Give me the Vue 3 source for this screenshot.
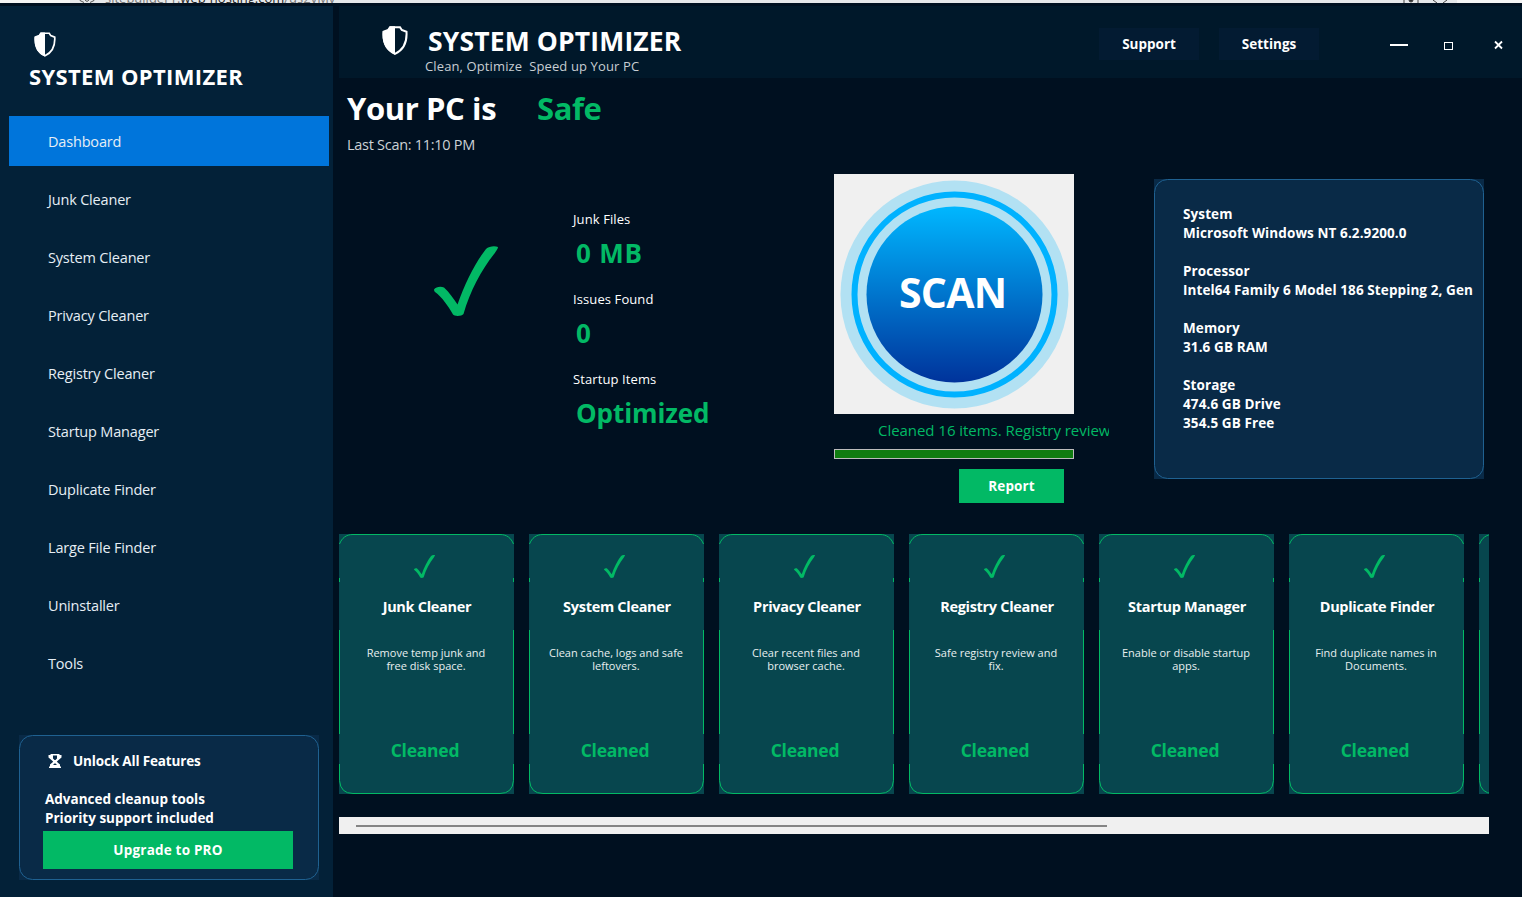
<template>
    <div class="window">
        <div class="browser-strip">
            <svg class="strip-lock" width="20" height="3" viewBox="0 0 20 3">
                <path d="M3 0v.5l4 2M17 0v.5l-4 2M8 0l2 1.5L12 0" />
            </svg>
            <span class="strip-url">sitebuilder1.<b>web-hosting.com</b>/us2vMv</span>
            <svg class="strip-icons" width="60" height="3" viewBox="0 0 60 3">
                <path d="M2 0v3M16 0v3M31 0l4 3M45 0l-4 3" />
                <circle cx="9" cy="0" r="2" />
            </svg>
        </div>

        <div class="body">
            <aside class="sidebar">
                <div class="brand">
                    <svg class="brand-icon" viewBox="0 0 26 29">
                        <path class="shield-line" d="M13 1.2H18L19.8 4L24.5 5.8C25 14 23.5 23 13 27.8C2.5 23 1 14 1.5 5.8L6.2 4L8 1.2Z" />
                        <path class="shield-fill" d="M13 .2H8L6 3.500L.8 5.500C0 14 1.500 23.500 13 28.800Z" />
                    </svg>
                    <span class="brand-name">SYSTEM OPTIMIZER</span>
                </div>

                <nav class="menu">
                    <button
                        v-for="item in menuItems"
                        :key="item"
                        :class="['menu-item', { active: item === activeItem }]"
                        @click="activeItem = item"
                    >{{ item }}</button>
                </nav>

                <div class="promo">
                    <svg class="panel-outline" width="300" height="145">
                        <rect x=".5" y=".5" width="299" height="144" rx="13" />
                    </svg>
                    <div class="promo-title">
                        <svg width="14" height="16" viewBox="0 0 14 16">
                            <path d="M2.500 1h9v1h2v2.500L10 7.500L8.800 8.800L12 11.500v2h1V15H1v-1.500h1v-2l3.200-2.700L4 7.500L.5 4.500V2h2z" />
                            <path class="trophy-hole" d="M5 2.500h4v3L7.500 7h-1L5 5.500zM5 12l1.500-1.500h1L9 12z" />
                        </svg>
                        <span>Unlock All Features</span>
                    </div>
                    <p class="promo-text">Advanced cleanup tools<br>Priority support included</p>
                    <button class="upgrade-btn">Upgrade to PRO</button>
                </div>
            </aside>

            <main class="main">
                <header class="header">
                    <svg class="header-icon" viewBox="0 0 26 29">
                        <path class="shield-line" d="M13 1.2H18L19.8 4L24.5 5.8C25 14 23.5 23 13 27.8C2.5 23 1 14 1.5 5.8L6.2 4L8 1.2Z" />
                        <path class="shield-fill" d="M13 .2H8L6 3.500L.8 5.500C0 14 1.500 23.500 13 28.800Z" />
                    </svg>
                    <div class="header-text">
                        <span class="header-title">SYSTEM OPTIMIZER</span>
                        <span class="header-sub">Clean, Optimize&nbsp; Speed up Your PC</span>
                    </div>
                    <button class="header-btn">Support</button>
                    <button class="header-btn">Settings</button>
                    <div class="window-controls">
                        <svg width="130" height="20" viewBox="0 0 130 20">
                            <path class="ctl-min" d="M10 11H28" />
                            <rect class="ctl-max" x="64.500" y="8.500" width="8" height="7" />
                            <path class="ctl-close" d="M115 7.500l7 7M122 7.500l-7 7" />
                        </svg>
                    </div>
                </header>

                <section class="status">
                    <h1>
                        <span class="status-label">Your PC is</span>
                        <span class="status-value">Safe</span>
                    </h1>
                    <p class="last-scan">Last Scan: 11:10 PM</p>
                </section>

                <section class="overview">
                    <svg class="big-check" width="64" height="70" viewBox="0 0 64 70">
                        <path :d="checkPath" />
                    </svg>

                    <div class="stats">
                        <div v-for="stat in stats" :key="stat.label" class="stat">
                            <span class="stat-label">{{ stat.label }}</span>
                            <span :class="['stat-value', stat.key]">{{ stat.value }}</span>
                        </div>
                    </div>

                    <div class="scan">
                        <button class="scan-btn">
                            <svg width="240" height="240" viewBox="0 0 240 240">
                                <defs>
                                    <linearGradient id="scanFill" x1="0" y1="0" x2="0" y2="1">
                                        <stop offset="0" stop-color="#00b7ff" />
                                        <stop offset="1" stop-color="#00339b" />
                                    </linearGradient>
                                </defs>
                                <circle cx="120.500" cy="120.500" r="114" fill="#b2e1f3" />
                                <circle cx="120.500" cy="120.500" r="100" fill="none" stroke="#00b2ff" stroke-width="6" />
                                <circle cx="120.500" cy="120.500" r="88" fill="url(#scanFill)" />
                                <text x="119" y="134" text-anchor="middle" textLength="108">SCAN</text>
                            </svg>
                        </button>
                        <div class="scan-message"><span>Cleaned 16 items. Registry reviewed.</span></div>
                        <div class="progress"></div>
                        <button class="report-btn">Report</button>
                    </div>

                    <div class="system-info">
                        <svg class="panel-outline" width="330" height="300">
                            <rect x=".5" y=".5" width="329" height="299" rx="13" />
                        </svg>
                        <dl v-for="info in systemInfo" :key="info.title">
                            <dt>{{ info.title }}</dt>
                            <dd v-for="line in info.lines" :key="line">{{ line }}</dd>
                        </dl>
                    </div>
                </section>

                <section class="cards">
                    <article v-for="card in cards" :key="card.title" class="card">
                        <svg class="card-outline" width="175" height="260">
                            <path d="M.5 10C3 4 7 .5 14 .5H161C168 .5 172 4 174.500 10M.5 44v4M174.500 44v4M.5 96V200M174.500 96V200M.5 230v16.500Q1.500 259.500 14 259.500H161Q173.500 259.500 174.500 246.500V230" />
                        </svg>
                        <svg class="card-check" width="21" height="23" viewBox="0 0 64 70">
                            <path :d="checkPath" />
                        </svg>
                        <h3>{{ card.title }}</h3>
                        <p><template v-for="line in card.text" :key="line">{{ line }}<br></template></p>
                        <strong v-if="card.title">Cleaned</strong>
                    </article>
                </section>

                <div class="scrollbar"><div class="scrollbar-thumb"></div></div>
            </main>
        </div>
    </div>
</template>

<script setup>
import { ref } from 'vue'

const menuItems = [
    'Dashboard',
    'Junk Cleaner',
    'System Cleaner',
    'Privacy Cleaner',
    'Registry Cleaner',
    'Startup Manager',
    'Duplicate Finder',
    'Large File Finder',
    'Uninstaller',
    'Tools'
]
const activeItem = ref('Dashboard')

const stats = [
    { key: 'junk', label: 'Junk Files', value: '0 MB' },
    { key: 'issues', label: 'Issues Found', value: '0' },
    { key: 'startup', label: 'Startup Items', value: 'Optimized' }
]

const systemInfo = [
    { title: 'System', lines: ['Microsoft Windows NT 6.2.9200.0'] },
    { title: 'Processor', lines: ['Intel64 Family 6 Model 186 Stepping 2, Gen'] },
    { title: 'Memory', lines: ['31.6 GB RAM'] },
    { title: 'Storage', lines: ['474.6 GB Drive', '354.5 GB Free'] }
]

const cards = [
    { title: 'Junk Cleaner', text: ['Remove temp junk and', 'free disk space.'] },
    { title: 'System Cleaner', text: ['Clean cache, logs and safe', 'leftovers.'] },
    { title: 'Privacy Cleaner', text: ['Clear recent files and', 'browser cache.'] },
    { title: 'Registry Cleaner', text: ['Safe registry review and', 'fix.'] },
    { title: 'Startup Manager', text: ['Enable or disable startup', 'apps.'] },
    { title: 'Duplicate Finder', text: ['Find duplicate names in', 'Documents.'] },
    { title: '', text: [] }
]

const checkPath = 'M0 43.500C2 40.500 7 40 10 41.500C15 46 20 53 23.500 58.500C31 37 41 17 52 3C55 0 61 -.5 64 1C64 3 62 5 60.500 7.500C48 23 36 45 29.500 68C28 70.500 20 70.500 19 68.500C14 60 8 51 1 46Q0 45 0 43.500Z'
</script>

<style>
body {
    margin: 0;
    overflow: hidden;
    background-color: #001020;
}
</style>

<style scoped>
.window {
    width: 1522px;
    height: 897px;
    overflow: hidden;
    background-color: #001020;
    color: #fff;
    font-family: "Open Sans", "Noto Sans", sans-serif;
}

button {
    border: none;
    padding: 0;
    color: inherit;
    font-family: inherit;
    cursor: pointer;
}

h1, h3, p, dl, dd {
    margin: 0;
}

svg {
    display: block;
    flex-shrink: 0;
}

.browser-strip {
    display: flex;
    height: 3px;
    overflow: hidden;
    background: linear-gradient(90deg, #f5f5f5 70px, #e6e8ea 70px, #e6e8ea 1457px, #f5f5f5 1457px);
}

.strip-lock {
    margin-left: 77px;
    fill: none;
    stroke: #555;
}

.strip-url {
    margin-left: 8px;
    margin-top: -9px;
    width: 1297px;
    height: 20px;
    line-height: 14px;
    font-size: 13px;
    color: #777;
    white-space: nowrap;
}

.strip-url b {
    color: #222;
    font-weight: 500;
}

.strip-icons {
    fill: #333;
    stroke: #444;
}

.body {
    display: flex;
    height: 891px;
    padding-top: 3px;
}

/* Sidebar */
.sidebar {
    display: flex;
    flex-direction: column;
    width: 333px;
    flex-shrink: 0;
    background-color: #032138;
}

.brand {
    height: 110px;
    display: flex;
    flex-direction: column;
}

.brand-icon {
    width: 22px;
    height: 25px;
    margin: 26px 0 0 34px;
}

.shield-line {
    fill: none;
    stroke: #fff;
    stroke-width: 2;
}

.shield-fill {
    fill: #fff;
}

.brand-name {
    margin: 5px 0 0 29px;
    line-height: 28px;
    font-size: 22px;
    font-weight: 700;
    letter-spacing: 0.35px;
    white-space: nowrap;
}

.menu {
    display: flex;
    flex-direction: column;
    gap: 8px;
    margin-left: 9px;
    width: 320px;
}

.menu-item {
    height: 50px;
    padding: 0 0 0 39px;
    background-color: transparent;
    text-align: left;
    font-size: 14.5px;
    letter-spacing: -0.18px;
    color: #e6eef5;
}

.menu-item.active {
    background-color: #0075db;
}

.promo {
    position: relative;
    box-sizing: border-box;
    width: 300px;
    height: 145px;
    margin: 47px 0 0 19px;
    padding: 17px 0 0 24px;
    background-color: #092a47;
    font-size: 13.5px;
    font-weight: 700;
}

.panel-outline {
    position: absolute;
    top: 0;
    left: 0;
    fill: none;
    stroke: #1f6191;
}

.promo-title {
    display: flex;
    align-items: center;
    gap: 11px;
    height: 18px;
    margin-left: 5px;
    letter-spacing: -0.15px;
}

.promo-title svg {
    fill: #fff;
}

.promo-title .trophy-hole {
    fill: #092a47;
}

.promo-text {
    margin: 20px 0 0 2px;
    line-height: 19px;
}

.upgrade-btn {
    display: block;
    width: 250px;
    height: 38px;
    margin-top: 3px;
    background-color: #02b965;
    font-size: 13.5px;
    font-weight: 700;
    letter-spacing: 0.2px;
}

/* Header */
.main {
    flex: 1;
    min-width: 0;
    padding-left: 6px;
}

.header {
    display: flex;
    height: 72px;
    background-color: #00182a;
}

.header-icon {
    width: 26px;
    height: 29px;
    margin: 20px 0 0 43px;
}

.header-text {
    display: flex;
    flex-direction: column;
    width: 674px;
    margin: 19px 0 0 17px;
    white-space: nowrap;
}

.header-title {
    margin-left: 3px;
    line-height: 32px;
    font-size: 26.5px;
    font-weight: 700;
    letter-spacing: 0.15px;
}

.header-sub {
    line-height: 18px;
    font-size: 13px;
    letter-spacing: 0.12px;
    color: #c8ced3;
}

.header-btn {
    width: 100px;
    height: 32px;
    margin: 22px 20px 0 0;
    background-color: #031b32;
    font-size: 13.5px;
    font-weight: 700;
}

.window-controls {
    margin: 28px 0 0 41px;
    fill: none;
    stroke: #fff;
}

.ctl-min {
    stroke-width: 2;
}

.ctl-close {
    stroke-width: 1.8;
}

/* Status line */
.status {
    height: 96px;
    padding-left: 8px;
}

.status h1 {
    display: flex;
    padding-top: 8px;
    line-height: 44px;
    font-size: 31px;
    letter-spacing: -0.4px;
}

.status-label {
    width: 190px;
}

.status-value {
    color: #02b965;
}

.last-scan {
    margin-top: 5px;
    line-height: 20px;
    font-size: 14.5px;
    letter-spacing: -0.28px;
    color: #ccd2d6;
}

/* Overview */
.overview {
    display: flex;
    align-items: flex-start;
    height: 360px;
}

.big-check {
    margin: 72px 0 0 95px;
    fill: #02b965;
}

.stats {
    width: 261px;
    margin: 35px 0 0 75px;
}

.stat {
    display: flex;
    flex-direction: column;
    height: 80px;
}

.stat-label {
    line-height: 20px;
    font-size: 13px;
    letter-spacing: 0.1px;
}

.stat-value {
    margin: 5px 0 0 3px;
    line-height: 38px;
    font-size: 26px;
    font-weight: 700;
    color: #02b965;
}

.stat-value.junk {
    letter-spacing: 0.8px;
}

.stat-value.startup {
    letter-spacing: -0.1px;
}

.scan {
    display: flex;
    flex-direction: column;
    width: 320px;
}

.scan-btn {
    width: 240px;
    height: 240px;
    background-color: #f0f0f0;
}

.scan-btn text {
    fill: #fff;
    font-size: 41px;
    font-weight: 700;
}

.scan-message {
    width: 231px;
    height: 25px;
    margin: 5px 0 0 44px;
    overflow: hidden;
    line-height: 22px;
    font-size: 15px;
    letter-spacing: -0.04px;
    color: #02b965;
    white-space: nowrap;
}

.progress {
    box-sizing: border-box;
    width: 240px;
    height: 10px;
    margin-top: 5px;
    border: 1px solid #bcbcbc;
    background-color: #107c10;
}

.report-btn {
    width: 105px;
    height: 34px;
    margin: 10px 0 0 125px;
    background-color: #02b965;
    font-size: 13.5px;
    font-weight: 700;
    letter-spacing: 0.1px;
}

.system-info {
    position: relative;
    box-sizing: border-box;
    width: 330px;
    height: 300px;
    margin-top: 5px;
    padding: 26px 0 0 29px;
    background-color: #092a47;
    line-height: 19px;
    font-size: 13.5px;
    font-weight: 700;
    letter-spacing: 0.1px;
    white-space: nowrap;
}

.system-info dl {
    margin-bottom: 19px;
}

/* Cards */
.cards {
    display: flex;
    gap: 15px;
    width: 1150px;
    height: 260px;
    overflow: hidden;
}

.card {
    position: relative;
    display: flex;
    flex-direction: column;
    align-items: center;
    width: 175px;
    height: 260px;
    flex-shrink: 0;
    background-color: #07464e;
    text-align: center;
    white-space: nowrap;
}

.card-outline {
    position: absolute;
    top: 0;
    left: 0;
    fill: none;
    stroke: #02b965;
}

.card-check {
    margin: 21px 4px 0 0;
    fill: #02b965;
}

.card h3 {
    height: 20px;
    margin: 19px -1px 0 0;
    line-height: 20px;
    font-size: 14.5px;
    letter-spacing: -0.3px;
}

.card p {
    height: 26px;
    margin: 29px 1px 0 0;
    line-height: 13px;
    font-size: 11px;
    color: #e8eff0;
}

.card strong {
    margin: 64px 3px 0 0;
    line-height: 28px;
    font-size: 17.5px;
    letter-spacing: -0.25px;
    color: #02b965;
}

/* Scrollbar */
.scrollbar {
    width: 1150px;
    height: 17px;
    margin-top: 23px;
    background-color: #f0f0f0;
    display: flex;
    align-items: center;
}

.scrollbar-thumb {
    width: 751px;
    height: 2px;
    margin: 1px 0 0 17px;
    background-color: #858585;
}
</style>
